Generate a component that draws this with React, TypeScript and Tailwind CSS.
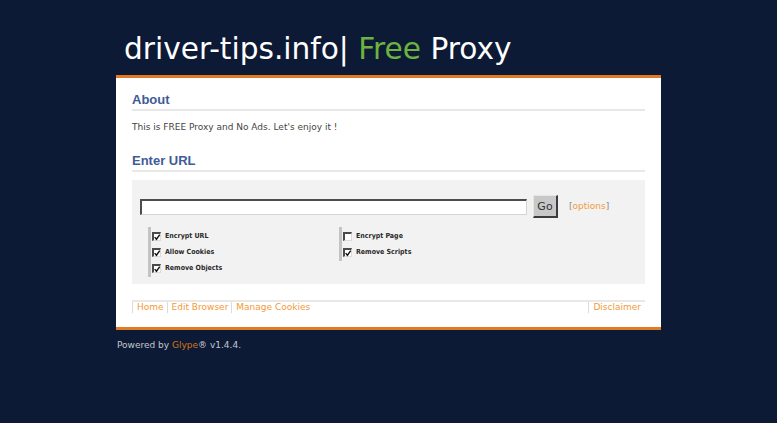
import React from 'react';

const colA: [string, boolean][] = [
  ['Encrypt URL', true],
  ['Allow Cookies', true],
  ['Remove Objects', true],
];

const colB: [string, boolean][] = [
  ['Encrypt Page', false],
  ['Remove Scripts', true],
];

function Box({ checked }: { checked: boolean }) {
  return (
    <span className="relative w-[9px] h-[9px] bg-white border-t-2 border-l-2 border-r border-b border-t-[#4a4a4a] border-l-[#4a4a4a] border-r-[#dcdcdc] border-b-[#dcdcdc] shrink-0">
      {checked && (
        <svg viewBox="0 0 8 8" className="absolute left-0 top-0 w-[7px] h-[7px]">
          <path d="M0.8 3.6 L2.8 6 L6.6 0.8" fill="none" stroke="#111" strokeWidth="1.6" />
        </svg>
      )}
    </span>
  );
}

function OptionCol({ items }: { items: [string, boolean][] }) {
  return (
    <div className="border-l-[3px] border-[#c4c4c4] pl-[1px] py-[1px]">
      {items.map(([label, checked]) => (
        <label key={label} className="flex items-center gap-[4px] h-[16px]">
          <Box checked={checked} />
          <span className="text-[7px] font-bold text-[#2a2a2a] font-['DejaVu_Sans_Condensed','DejaVu_Sans',sans-serif] leading-none">
            {label}
          </span>
        </label>
      ))}
    </div>
  );
}

export default function App() {
  return (
    <div className="w-[777px] h-[423px] bg-[#0d1a35] font-['DejaVu_Sans',sans-serif] overflow-hidden">
      <div className="ml-[116px] w-[545px]">
        {/* Header */}
        <div className="h-[75px] pt-[35px] pl-[8px] text-[29.6px] leading-[29px] text-white whitespace-nowrap">
          driver-tips.info| <span className="text-[#6db33f]">Free</span> Proxy
        </div>

        {/* Panel */}
        <div className="bg-white border-t-[3px] border-b-[3px] border-[#e07b24] px-[16px] pt-[14px] pb-[14px]">
          <h2 className="text-[13px] leading-[15px] font-bold text-[#3f5b98] font-['Liberation_Sans',Arial,sans-serif] pb-[2px] border-b-2 border-[#e8e8e8]">
            About
          </h2>
          <p className="mt-[10px] text-[9px] leading-[12px] text-[#444]">
            This is FREE Proxy and No Ads. Let's enjoy it !
          </p>

          <h2 className="mt-[20px] text-[13px] leading-[15px] font-bold text-[#3f5b98] font-['Liberation_Sans',Arial,sans-serif] pb-[2px] border-b-2 border-[#e8e8e8]">
            Enter URL
          </h2>

          <div className="mt-[8px] bg-[#f2f2f2] pt-[15px] pb-[7px] pl-[8px]">
            <div className="flex items-center">
              <input
                type="text"
                className="w-[387px] h-[16px] bg-white border-t-2 border-l-2 border-r border-b border-t-[#4d4d4d] border-l-[#4d4d4d] border-r-[#d4d4d4] border-b-[#d4d4d4] outline-none"
              />
              <button className="ml-[6px] w-[25px] h-[23px] bg-[#c8c8c8] border-t border-l border-r-2 border-b-2 border-t-[#e6e6e6] border-l-[#e6e6e6] border-r-[#3c3c3c] border-b-[#3c3c3c] text-[11px] leading-none text-[#333]">
                Go
              </button>
              <span className="ml-[11px] text-[9px] text-[#8a8a8a]">
                [<span className="text-[#f39a3a]">options</span>]
              </span>
            </div>

            <div className="mt-[9px] ml-[8px] flex items-start">
              <div className="w-[191px]">
                <OptionCol items={colA} />
              </div>
              <OptionCol items={colB} />
            </div>
          </div>

          {/* Footer nav */}
          <div className="mt-[16px] border-t-2 border-[#e8e8e8] flex justify-between text-[9px] leading-[11px] text-[#f39a3a]">
            <div className="flex">
              <a className="border-l border-[#dcdcdc] pl-[4px] pr-[3px]">Home</a>
              <a className="border-l border-[#dcdcdc] pl-[4px] pr-[3px]">Edit Browser</a>
              <a className="border-l border-[#dcdcdc] pl-[4px] pr-[3px]">Manage Cookies</a>
            </div>
            <a className="border-l border-[#dcdcdc] pl-[4px] pr-[4px]">Disclaimer</a>
          </div>
        </div>

        {/* Powered by */}
        <p className="mt-[9px] pl-[1px] text-[9px] leading-[12px] text-[#c3c7cf]">
          Powered by <span className="text-[#d4741a]">Glype</span>® v1.4.4.
        </p>
      </div>
    </div>
  );
}
